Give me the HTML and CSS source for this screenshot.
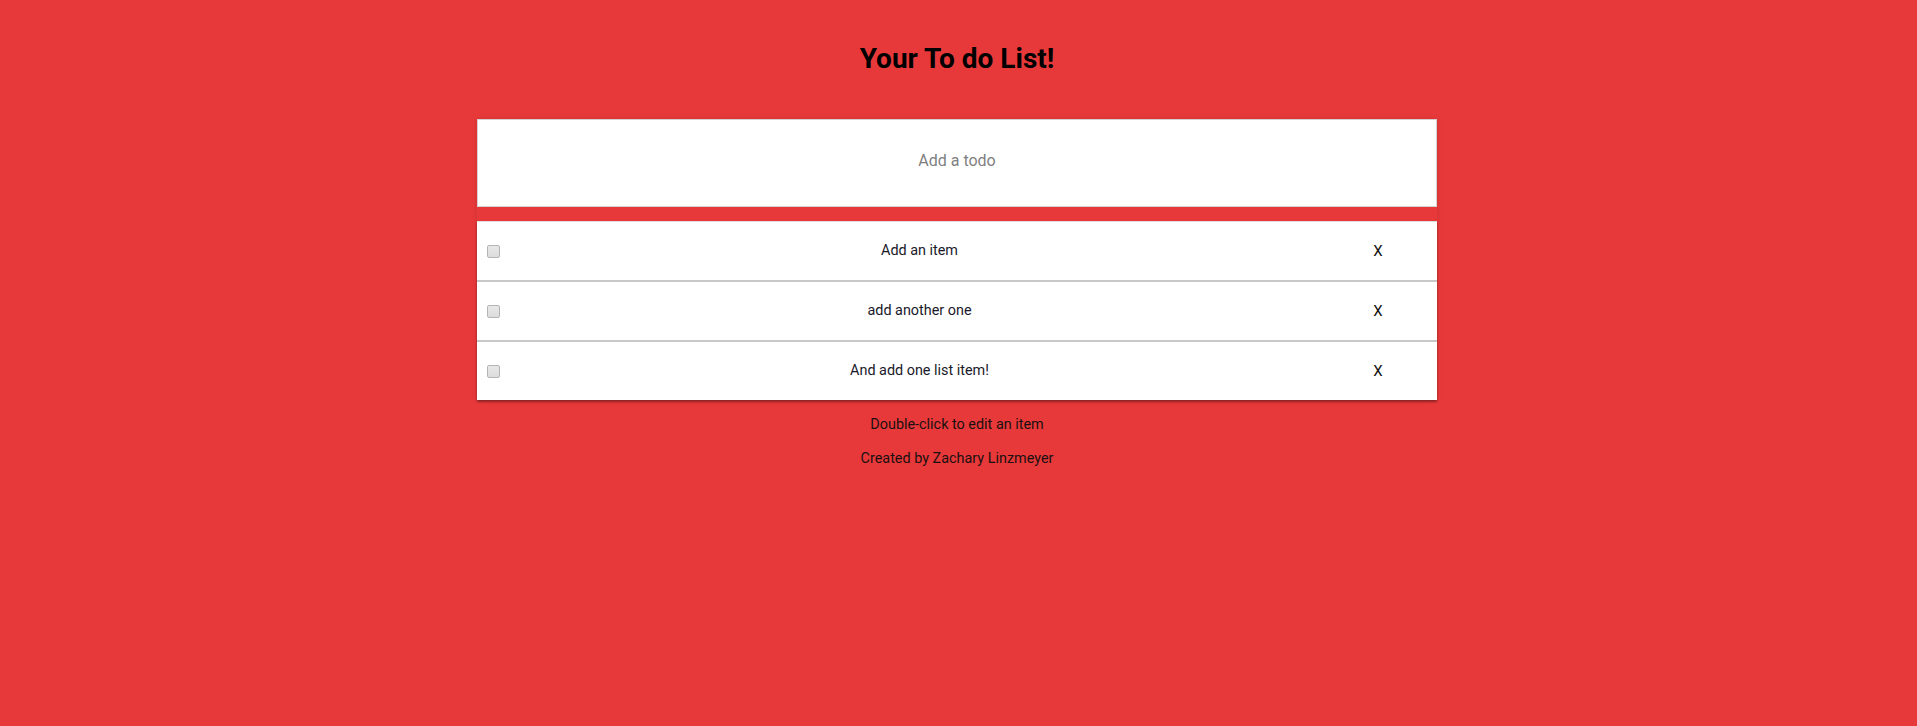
FILE: index.html
```html
<!DOCTYPE html>
<html lang="en">
<head>
<meta charset="utf-8">
<title>Your To do List!</title>
<link rel="stylesheet" href="styles.css">
</head>
<body>
<h1 class="title">Your To do List!</h1>
<section class="app">
  <input class="new-todo" type="text" placeholder="Add a todo" autofocus>
  <ul class="todo-list">
    <li class="todo"><input class="toggle" type="checkbox"><label class="todo-text">Add an item</label><button class="destroy">X</button></li>
    <li class="todo"><input class="toggle" type="checkbox"><label class="todo-text">add another one</label><button class="destroy">X</button></li>
    <li class="todo"><input class="toggle" type="checkbox"><label class="todo-text">And add one list item!</label><button class="destroy">X</button></li>
  </ul>
</section>
<footer class="info">
  <p class="info-line">Double-click to edit an item</p>
  <p class="info-line">Created by Zachary Linzmeyer</p>
</footer>
</body>
</html>
```
FILE: styles.css
```css
html, body {
  margin: 0;
  padding: 0;
}
body {
  background: #e8393a;
  font-family: Roboto, "Liberation Sans", Arial, sans-serif;
  color: #111;
  min-height: 726px;
  padding-right: 3px;
}
.title {
  margin: 0;
  padding-top: 43px;
  font-size: 28px;
  line-height: 32px;
  font-weight: 700;
  text-align: center;
  color: #000;
}
.app {
  width: 960px;
  margin: 44px auto 0;
  box-shadow: 0 0 6px rgba(0, 0, 0, 0.12);
}
.new-todo {
  display: block;
  width: 100%;
  height: 88px;
  box-sizing: border-box;
  margin: 0;
  padding: 0 0 5px;
  border: 1px solid #d2d2d2;
  outline: none;
  background: #fff;
  font-family: Roboto, "Liberation Sans", Arial, sans-serif;
  font-size: 16px;
  text-align: center;
  color: #222;
  caret-color: #000;
}
.new-todo::placeholder {
  color: #808080;
}
.todo-list {
  list-style: none;
  margin: 14px 0 0;
  padding: 0;
  background: #fff;
  border-top: 1px solid #dcdcdc;
  box-shadow: 0 2px 2px rgba(0, 0, 0, 0.35);
}
.todo {
  display: flex;
  align-items: center;
  height: 58px;
  padding: 0 16px 0 10px;
  border-bottom: 2px solid #c8c8c8;
}
.todo:last-child {
  border-bottom: none;
}
.toggle {
  appearance: none;
  -webkit-appearance: none;
  width: 13px;
  height: 13px;
  margin: 0;
  box-sizing: border-box;
  border: 1px solid #b4b4b4;
  border-radius: 2px;
  background: linear-gradient(#e8e8e8, #dcdcdc);
  flex: none;
}
.todo-text {
  flex: 1;
  padding: 0 0 2px 4px;
  text-align: center;
  font-size: 14.4px;
  color: #1a1a2a;
}
.destroy {
  flex: none;
  width: 86px;
  border: none;
  background: none;
  padding: 0;
  font-family: Roboto, "Liberation Sans", Arial, sans-serif;
  font-size: 15px;
  color: #111;
  text-align: center;
}
.info {
  text-align: center;
  font-size: 14.4px;
  color: #1a1010;
}
.info-line {
  margin: 15px 0 0;
  line-height: 20px;
}
.info-line + .info-line {
  margin-top: 14px;
}
```
